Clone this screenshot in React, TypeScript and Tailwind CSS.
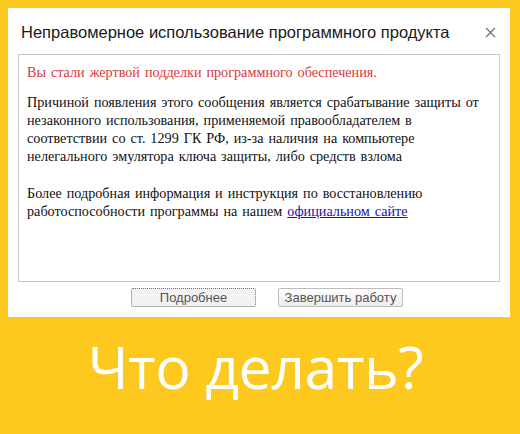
import React from 'react';

function CloseIcon() {
  return (
    <svg width="11" height="11" viewBox="0 0 11 11" className="block">
      <path d="M1 1 L10 10 M10 1 L1 10" stroke="#6b6b6b" strokeWidth="1.1" fill="none" />
    </svg>
  );
}

function DialogButton({ label, focused }: { label: string; focused?: boolean }) {
  return (
    <button
      type="button"
      className={
        focused
          ? 'w-[125px] h-[19px] rounded-[2px] border border-dotted border-[#6f6f6f] bg-[#f2f2f2] text-[13px] leading-[17px] text-[#555] font-["Liberation_Sans",Arial,sans-serif]'
          : 'w-[125px] h-[19px] rounded-[2px] border border-[#bdbdbd] bg-gradient-to-b from-[#ffffff] to-[#ececec] text-[13px] leading-[17px] text-[#555] font-["Liberation_Sans",Arial,sans-serif]'
      }
    >
      {label}
    </button>
  );
}

export default function App() {
  return (
    <div className="w-[520px] h-[434px] bg-[#fec91e] flex flex-col overflow-hidden">
      <div className="mt-[8px] ml-[8px] w-[502px] h-[309px] bg-white flex flex-col">
        <div className="h-[46px] flex items-start justify-between pl-[13px] pr-[14px] pt-[14px]">
          <span className="text-[16.5px] leading-[20px] text-[#1a1a1a] font-['Liberation_Sans',Arial,sans-serif]">
            Неправомерное использование программного продукта
          </span>
          <span className="mt-[5px]">
            <CloseIcon />
          </span>
        </div>

        <div className="mx-[10px] w-[482px] h-[228px] border border-[#c9c9c9] pl-[8px] pt-[8px] text-[14.2px] leading-[18px] [word-spacing:1.4px] text-[#111] font-['Liberation_Serif','Times_New_Roman','DejaVu_Serif',serif]">
          <p className="text-[#d9383a]">Вы стали жертвой подделки программного обеспечения.</p>
          <p className="mt-[12px]">
            Причиной появления этого сообщения является срабатывание защиты от
            <br />
            незаконного использования, применяемой правообладателем в
            <br />
            соответствии со ст. 1299 ГК РФ, из-за наличия на компьютере
            <br />
            нелегального эмулятора ключа защиты, либо средств взлома
          </p>
          <p className="mt-[19px]">
            Более подробная информация и инструкция по восстановлению
            <br />
            работоспособности программы на нашем{' '}
            <a href="#" className="text-[#1a0dbb] underline">
              официальном сайте
            </a>
          </p>
        </div>

        <div className="mt-[6px] flex justify-center gap-[22px] pl-[16px]">
          <DialogButton label="Подробнее" focused />
          <DialogButton label="Завершить работу" />
        </div>
      </div>

      <div className="flex-1 flex items-center justify-center pb-[18px] pr-[9px]">
        <span className="text-white text-[59px] leading-none tracking-[-0.5px] font-['Open_Sans','Noto_Sans',sans-serif]">
          Что делать?
        </span>
      </div>
    </div>
  );
}
